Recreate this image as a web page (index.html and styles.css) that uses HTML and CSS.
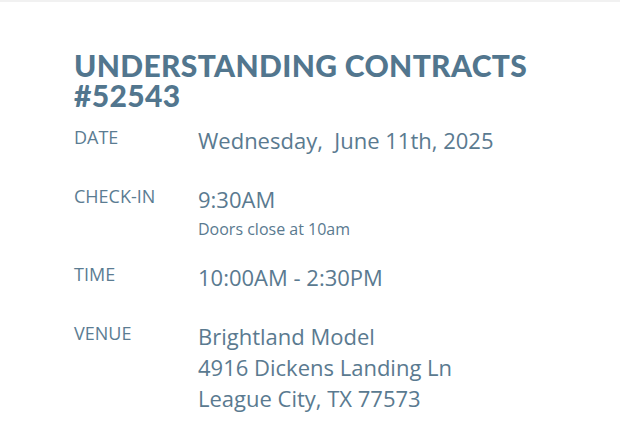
FILE: index.html
```html
<!DOCTYPE html>
<html>
<head>
<meta charset="utf-8">
<link rel="stylesheet" href="styles.css">
</head>
<body>
<div class="topline"></div>
<main class="card">
  <h1 class="title"><span class="title-line">UNDERSTANDING CONTRACTS</span><span class="title-line">#52543</span></h1>
  <div class="rows">
    <div class="row row-wide">
      <div class="label">DATE</div>
      <div class="value">Wednesday,&nbsp; June 11th, 2025</div>
    </div>
    <div class="row row-tight">
      <div class="label">CHECK-IN</div>
      <div class="value">9:30AM<div class="note">Doors close at 10am</div></div>
    </div>
    <div class="row row-wide">
      <div class="label">TIME</div>
      <div class="value">10:00AM - 2:30PM</div>
    </div>
    <div class="row">
      <div class="label">VENUE</div>
      <div class="value">Brightland Model<br>4916 Dickens Landing Ln<br>League City, TX 77573</div>
    </div>
  </div>
</main>
</body>
</html>
```
FILE: styles.css
```css
html, body {
  margin: 0;
  padding: 0;
  background: #ffffff;
}
.topline {
  height: 2px;
  background: #f1f1f1;
}
.card {
  padding: 48px 0 0 74px;
  font-family: "Open Sans", sans-serif;
  color: #5a7a90;
}
.title {
  margin: 0 0 15px 0;
  font-family: Lato, sans-serif;
  font-weight: 900;
  font-size: 30px;
  line-height: 30px;
  letter-spacing: 0.35px;
  color: #52768e;
}
.title-line {
  display: block;
  height: 30px;
}
.rows {
  display: flex;
  flex-direction: column;
}
.row {
  display: flex;
}
.row-wide {
  margin-bottom: 28px;
}
.row-tight {
  margin-bottom: 23px;
}
.label {
  width: 124px;
  flex: none;
  font-size: 18px;
  line-height: 24px;
  color: #5b7c92;
}
.value {
  font-size: 22px;
  line-height: 31px;
}
.note {
  padding-top: 5px;
  font-size: 16px;
  line-height: 19px;
}
```
